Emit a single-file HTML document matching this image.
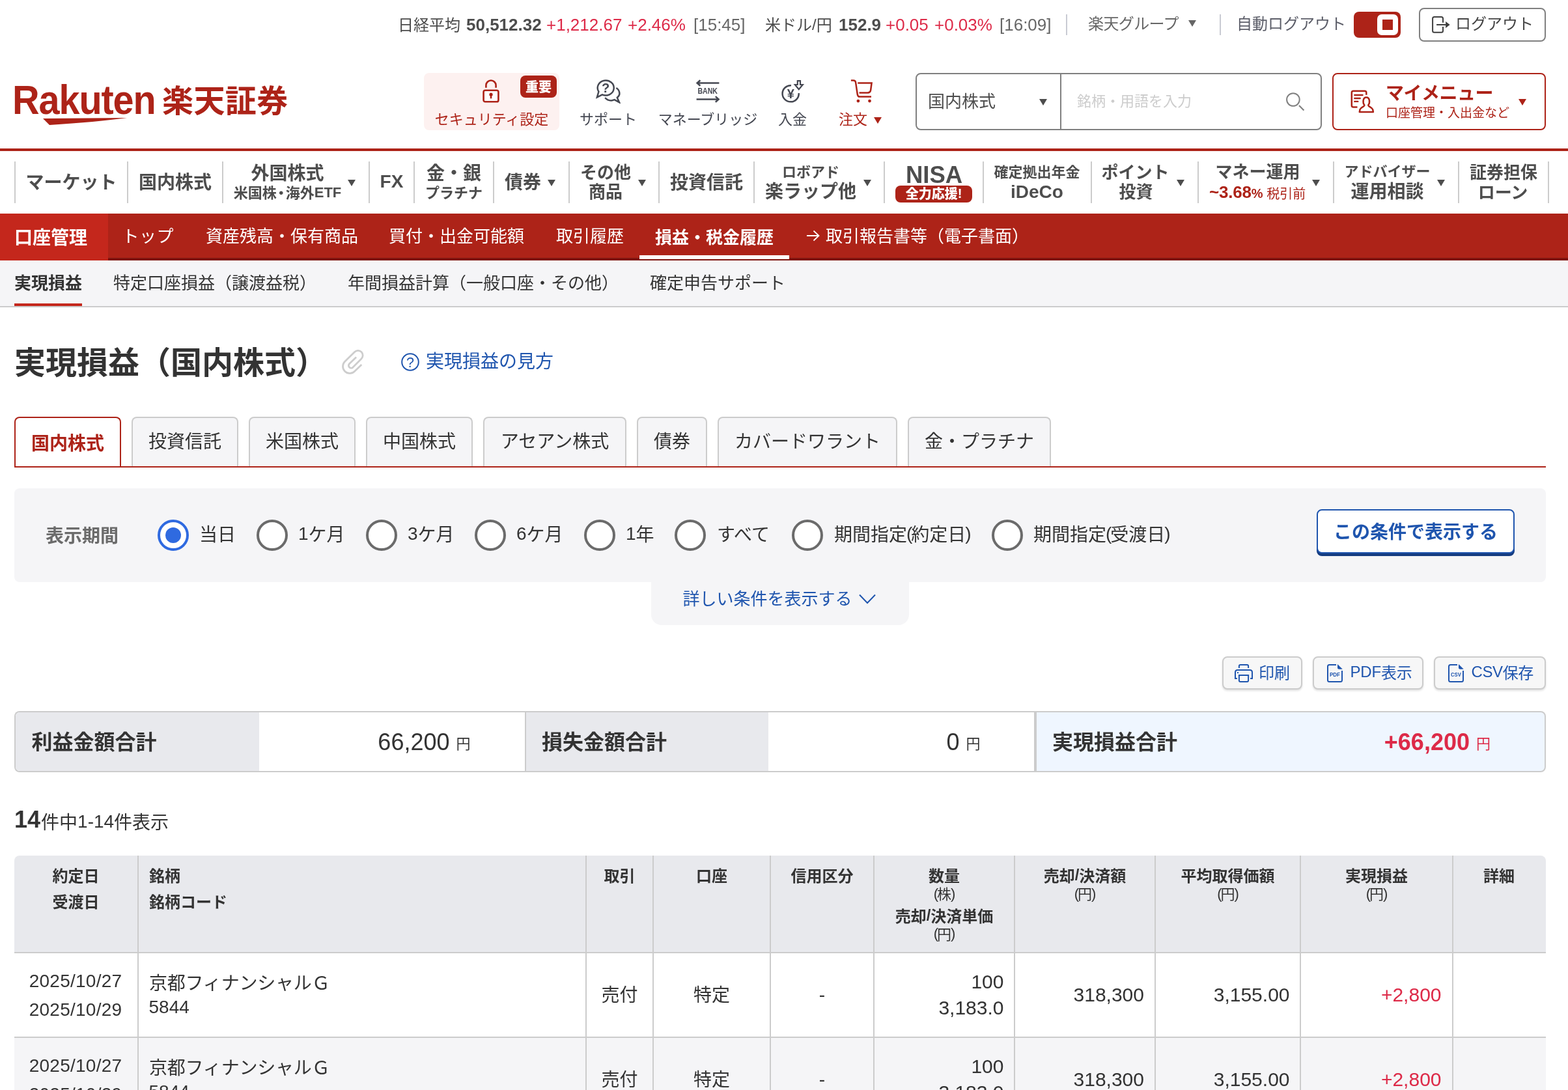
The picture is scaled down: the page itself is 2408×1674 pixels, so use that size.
<!DOCTYPE html>
<html lang="ja">
<head>
<meta charset="utf-8">
<title>実現損益（国内株式）</title>
<style>
html,body{margin:0;padding:0;}
body{width:2408px;height:1674px;overflow:hidden;background:#fff;position:relative;font-family:"Liberation Sans","Noto Sans CJK JP",sans-serif;color:#333;}
.t{position:absolute;white-space:nowrap;line-height:1;backface-visibility:hidden;}
.x{position:absolute;box-sizing:border-box;display:block;}
svg.x{backface-visibility:hidden;}
.j{position:relative;top:0.065em}
.p{letter-spacing:-2px;margin-left:-1px}
svg text{font-family:"Liberation Sans","Noto Sans CJK JP",sans-serif;}
</style>
</head>
<body>
<div class="t" style="left:611px;top:25.5px;font-size:24px;color:#4a4a4a;"><span class="j">日経平均</span></div>
<div class="t" style="left:716px;top:25px;font-size:26px;color:#4d4d4d;font-weight:700;">50,512.32</div>
<div class="t" style="left:839px;top:25px;font-size:26px;color:#dd2a48;">+1,212.67</div>
<div class="t" style="left:964px;top:25px;font-size:26px;color:#dd2a48;">+2.46%</div>
<div class="t" style="left:1065px;top:25px;font-size:26px;color:#666;">[15:45]</div>
<div class="t" style="left:1175px;top:25.5px;font-size:24px;color:#4a4a4a;"><span class="j">米ドル</span>/<span class="j">円</span></div>
<div class="t" style="left:1288px;top:25px;font-size:26px;color:#4d4d4d;font-weight:700;">152.9</div>
<div class="t" style="left:1360px;top:25px;font-size:26px;color:#dd2a48;">+0.05</div>
<div class="t" style="left:1435px;top:25px;font-size:26px;color:#dd2a48;">+0.03%</div>
<div class="t" style="left:1535px;top:25px;font-size:26px;color:#666;">[16:09]</div>
<div class="x" style="left:1637px;top:22px;width:2px;height:32px;background:#c9cbd3;"></div>
<div class="t" style="left:1671px;top:23.5px;font-size:24px;color:#666;letter-spacing:-0.6px;"><span class="j">楽天グループ</span></div>
<div class="x" style="left:1825px;top:31px;width:0;height:0;border-left:6px solid transparent;border-right:6px solid transparent;border-top:10px solid #666;"></div>
<div class="x" style="left:1873px;top:22px;width:2px;height:32px;background:#c9cbd3;"></div>
<div class="t" style="left:1899px;top:23.5px;font-size:24px;color:#5c5e69;"><span class="j">自動ログアウト</span></div>
<div class="x" style="left:2079px;top:18px;width:72px;height:40px;background:#ad2318;border-radius:8px;"></div>
<div class="x" style="left:2115px;top:22px;width:32px;height:32px;background:#fff;border-radius:7px;"></div>
<div class="x" style="left:2123px;top:30px;width:16px;height:16px;background:#ad2318;"></div>
<div class="x" style="left:2179px;top:12px;width:195px;height:52px;border:2px solid #808080;border-radius:8px;background:#fff;"></div>
<svg class="x" style="left:2198px;top:24px;" width="30" height="28" viewBox="0 0 30 28"><path d="M18 10.8V4.6Q18 2.1 15.5 2.1H4.6Q2.1 2.1 2.1 4.6V23.3Q2.1 25.8 4.6 25.8H15.5Q18 25.8 18 23.3V17.1" fill="none" stroke="#3e3e3e" stroke-width="2"/><path d="M8.1 14H22.5" fill="none" stroke="#3e3e3e" stroke-width="2"/><path d="M22.1 9.1L28.6 14L22.1 18.9Z" fill="#3e3e3e"/></svg>
<div class="t" style="left:2235px;top:23.5px;font-size:24px;color:#444;"><span class="j">ログアウト</span></div>
<div class="t" style="left:18.7px;top:122.25px;font-size:63.5px;color:#ad2318;font-weight:700;letter-spacing:-1.2px;transform:scaleX(0.907);transform-origin:0 50%;">Rakuten</div>
<svg class="x" style="left:64px;top:180px" width="134" height="14" viewBox="0 0 134 14"><path d="M2 2 L131 1 C100 5 60 9 12 12 Z" fill="#ad2318"/></svg>
<div class="t" style="left:249px;top:129px;font-size:48px;color:#ad2318;font-weight:700;letter-spacing:0.4px;"><span class="j">楽天証券</span></div>
<div class="x" style="left:651px;top:112px;width:208px;height:88px;background:#fdf1f0;border-radius:8px;"></div>
<svg class="x" style="left:740px;top:121px;" width="28" height="38" viewBox="0 0 28 38"><path d="M6.4 13.8V10.1A7.6 7.6 0 0 1 21.6 10.1V13.8" fill="none" stroke="#ad2318" stroke-width="2.6"/><rect x="2.6" y="17.8" width="22.8" height="17.5" rx="2.6" fill="#fff" stroke="#ad2318" stroke-width="2.6"/><circle cx="14" cy="24.2" r="2.6" fill="#ad2318"/><path d="M13 24H15L15.4 30.2H12.6Z" fill="#ad2318"/></svg>
<div class="x" style="left:799px;top:116px;width:56px;height:34px;background:#ad2318;border-radius:8px;"></div>
<div class="t" style="left:827px;transform:translateX(-50%);top:123px;font-size:20px;color:#fff;font-weight:900;"><span class="j">重要</span></div>
<div class="t" style="left:755px;transform:translateX(-50%);top:171.5px;font-size:22px;color:#ad2318;"><span class="j">セキュリティ設定</span></div>
<svg class="x" style="left:915px;top:121px;" width="38" height="38" viewBox="0 0 38 38"><path d="M4.4 19.75A12.5 11.5 0 1 1 9.9 24.4L1.9 28.4Z" fill="none" stroke="#454852" stroke-width="2.5" stroke-linejoin="miter"/><path d="M31.4 14C34.5 16 36.4 19.5 36.4 22.8C36.4 25 35 27.3 32.8 29L36 36.2L28.6 32.2C27 32.9 25.4 33.4 23.6 33.4C19.8 33.4 16.4 31.7 14.2 29" fill="none" stroke="#454852" stroke-width="2.5" stroke-linejoin="miter"/><text x="15.2" y="21.3" font-size="20" font-weight="700" fill="#454852" text-anchor="middle">?</text></svg>
<div class="t" style="left:934px;transform:translateX(-50%);top:171.5px;font-size:22px;color:#454852;"><span class="j">サポート</span></div>
<svg class="x" style="left:1068px;top:121px;" width="38" height="38" viewBox="0 0 38 38"><path d="M36.4 6.5H3M7.4 2.2L2.6 6.5L7.4 10.8" fill="none" stroke="#454852" stroke-width="2.5"/><path d="M1.6 31.4H35.2M30.8 27.1L35.6 31.4L30.8 35.7" fill="none" stroke="#454852" stroke-width="2.5"/><text x="18.75" y="23.4" font-size="12.8" font-weight="700" fill="#454852" text-anchor="middle" textLength="30.5" lengthAdjust="spacingAndGlyphs">BANK</text></svg>
<div class="t" style="left:1087px;transform:translateX(-50%);top:171.5px;font-size:22px;color:#454852;"><span class="j">マネーブリッジ</span></div>
<svg class="x" style="left:1198px;top:121px;" width="38" height="38" viewBox="0 0 38 38"><path d="M17 10.2A12.6 12.6 0 1 0 28.75 22" fill="none" stroke="#454852" stroke-width="2.5"/><path d="M26.8 3.2H31V9H34.8L28.8 16.3L22.8 9H26.8Z" fill="none" stroke="#454852" stroke-width="2.2" stroke-linejoin="miter"/><text x="16.2" y="30" font-size="20" font-weight="700" fill="#454852" text-anchor="middle">¥</text></svg>
<div class="t" style="left:1217px;transform:translateX(-50%);top:171.5px;font-size:22px;color:#454852;"><span class="j">入金</span></div>
<svg class="x" style="left:1305px;top:121px;" width="36" height="38" viewBox="0 0 36 38"><path d="M1.9 2.6H5.6Q8.6 2.6 9.1 5.6L11.8 24Q12.3 27.6 15.5 27.6H33" fill="none" stroke="#ad2318" stroke-width="2.5"/><path d="M12.3 6.5H33.6L32.2 17Q31.6 21.4 27.5 21.4H14.5" fill="none" stroke="#ad2318" stroke-width="2.5"/><circle cx="12.9" cy="34.1" r="2.4" fill="#ad2318"/><circle cx="30.5" cy="34.1" r="2.4" fill="#ad2318"/></svg>
<div class="t" style="left:1288px;top:171.5px;font-size:22px;color:#ad2318;"><span class="j">注文</span></div>
<div class="x" style="left:1342px;top:179.5px;width:0;height:0;border-left:6px solid transparent;border-right:6px solid transparent;border-top:10px solid #ad2318;"></div>
<div class="x" style="left:1406px;top:112px;width:624px;height:88px;border:2px solid #808080;border-radius:8px;background:#fff;"></div>
<div class="x" style="left:1628px;top:114px;width:2px;height:84px;background:#808080;"></div>
<div class="t" style="left:1425px;top:141.5px;font-size:26px;color:#4d4d4d;"><span class="j">国内株式</span></div>
<div class="x" style="left:1596px;top:151.5px;width:0;height:0;border-left:6px solid transparent;border-right:6px solid transparent;border-top:10px solid #4d4d4d;"></div>
<div class="t" style="left:1654px;top:144px;font-size:22px;color:#ccc;"><span class="j">銘柄・用語を入力</span></div>
<svg class="x" style="left:1973px;top:141px;" width="32" height="30" viewBox="0 0 32 30"><circle cx="12.9" cy="12" r="9.8" fill="none" stroke="#808080" stroke-width="2"/><path d="M22 20.9L29.4 28.5" fill="none" stroke="#808080" stroke-width="2.2"/></svg>
<div class="x" style="left:2046px;top:112px;width:328px;height:88px;border:2px solid #ad2318;border-radius:8px;background:#fff;"></div>
<svg class="x" style="left:2073px;top:137px;" width="38" height="38" viewBox="0 0 38 38"><path d="M25.3 8.7V5.3Q25.3 2.8 22.8 2.8H5.3Q2.8 2.8 2.8 5.3V24.9Q2.8 27.4 5.3 27.4H11.5" fill="none" stroke="#ad2318" stroke-width="2.5"/><path d="M7.3 9H19.5M7.3 14H15.7M7.3 18.9H12.3" fill="none" stroke="#ad2318" stroke-width="2.4" stroke-linecap="round"/><path d="M22.3 24.3C19.6 21.5 19.6 12.4 25.3 12.4C31 12.4 31 21.5 28.3 24.3C27.6 26.6 33.8 27.3 35.2 31.2L35.9 34.9H14.8L15.5 31.2C16.9 27.3 23 26.6 22.3 24.3Z" fill="none" stroke="#ad2318" stroke-width="2.5" stroke-linejoin="round"/></svg>
<div class="t" style="left:2128px;top:128px;font-size:28px;color:#ad2318;font-weight:700;letter-spacing:-0.5px;"><span class="j">マイメニュー</span></div>
<div class="t" style="left:2128px;top:163px;font-size:19px;color:#ad2318;"><span class="j">口座管理・入出金など</span></div>
<div class="x" style="left:2332px;top:151.5px;width:0;height:0;border-left:6px solid transparent;border-right:6px solid transparent;border-top:10px solid #ad2318;"></div>
<div class="x" style="left:0px;top:228px;width:2408px;height:4px;background:#ad2318;"></div>
<div class="x" style="left:22px;top:248px;width:2px;height:64px;background:#ccc;"></div>
<div class="x" style="left:195px;top:248px;width:2px;height:64px;background:#ccc;"></div>
<div class="x" style="left:341px;top:248px;width:2px;height:64px;background:#ccc;"></div>
<div class="x" style="left:566px;top:248px;width:2px;height:64px;background:#ccc;"></div>
<div class="x" style="left:635px;top:248px;width:2px;height:64px;background:#ccc;"></div>
<div class="x" style="left:757px;top:248px;width:2px;height:64px;background:#ccc;"></div>
<div class="x" style="left:873px;top:248px;width:2px;height:64px;background:#ccc;"></div>
<div class="x" style="left:1011px;top:248px;width:2px;height:64px;background:#ccc;"></div>
<div class="x" style="left:1157px;top:248px;width:2px;height:64px;background:#ccc;"></div>
<div class="x" style="left:1357px;top:248px;width:2px;height:64px;background:#ccc;"></div>
<div class="x" style="left:1509px;top:248px;width:2px;height:64px;background:#ccc;"></div>
<div class="x" style="left:1675px;top:248px;width:2px;height:64px;background:#ccc;"></div>
<div class="x" style="left:1839px;top:248px;width:2px;height:64px;background:#ccc;"></div>
<div class="x" style="left:2047px;top:248px;width:2px;height:64px;background:#ccc;"></div>
<div class="x" style="left:2239px;top:248px;width:2px;height:64px;background:#ccc;"></div>
<div class="x" style="left:2377px;top:248px;width:2px;height:64px;background:#ccc;"></div>
<div class="t" style="left:109.5px;transform:translateX(-50%);top:265px;font-size:28px;color:#4d4d4d;font-weight:700;"><span class="j">マーケット</span></div>
<div class="t" style="left:269px;transform:translateX(-50%);top:265px;font-size:28px;color:#4d4d4d;font-weight:700;"><span class="j">国内株式</span></div>
<div class="t" style="left:441.5px;transform:translateX(-50%);top:251.5px;font-size:28px;color:#4d4d4d;font-weight:700;"><span class="j">外国株式</span></div>
<div class="t" style="left:441.5px;transform:translateX(-50%);top:285px;font-size:22px;color:#4d4d4d;font-weight:700;"><span class="j">米国株</span><span style="letter-spacing:-4px;margin-left:-4px"><span class="j">・</span></span><span class="j">海外</span>ETF</div>
<div class="x" style="left:534px;top:275.5px;width:0;height:0;border-left:6px solid transparent;border-right:6px solid transparent;border-top:10px solid #4d4d4d;"></div>
<div class="t" style="left:601.5px;transform:translateX(-50%);top:265px;font-size:28px;color:#4d4d4d;font-weight:700;">FX</div>
<div class="t" style="left:697px;transform:translateX(-50%);top:251.5px;font-size:28px;color:#4d4d4d;font-weight:700;"><span class="j">金・銀</span></div>
<div class="t" style="left:697px;transform:translateX(-50%);top:284.5px;font-size:22px;color:#4d4d4d;font-weight:700;"><span class="j">プラチナ</span></div>
<div class="t" style="left:803px;transform:translateX(-50%);top:265px;font-size:28px;color:#4d4d4d;font-weight:700;"><span class="j">債券</span></div>
<div class="x" style="left:841px;top:275.5px;width:0;height:0;border-left:6px solid transparent;border-right:6px solid transparent;border-top:10px solid #4d4d4d;"></div>
<div class="t" style="left:930px;transform:translateX(-50%);top:250px;font-size:26px;color:#4d4d4d;font-weight:700;"><span class="j">その他</span></div>
<div class="t" style="left:930px;transform:translateX(-50%);top:280.5px;font-size:26px;color:#4d4d4d;font-weight:700;"><span class="j">商品</span></div>
<div class="x" style="left:979.5px;top:275.5px;width:0;height:0;border-left:6px solid transparent;border-right:6px solid transparent;border-top:10px solid #4d4d4d;"></div>
<div class="t" style="left:1085px;transform:translateX(-50%);top:265px;font-size:28px;color:#4d4d4d;font-weight:700;"><span class="j">投資信託</span></div>
<div class="t" style="left:1245px;transform:translateX(-50%);top:252.5px;font-size:22px;color:#4d4d4d;font-weight:700;"><span class="j">ロボアド</span></div>
<div class="t" style="left:1245px;transform:translateX(-50%);top:279.5px;font-size:28px;color:#4d4d4d;font-weight:700;"><span class="j">楽ラップ他</span></div>
<div class="x" style="left:1325.5px;top:275.5px;width:0;height:0;border-left:6px solid transparent;border-right:6px solid transparent;border-top:10px solid #4d4d4d;"></div>
<div class="t" style="left:1434.5px;transform:translateX(-50%);top:250.75px;font-size:36.5px;color:#4d4d4d;font-weight:700;">NISA</div>
<div class="x" style="left:1375px;top:285px;width:118px;height:26px;background:#ad2318;border-radius:8px;"></div>
<div class="t" style="left:1434px;transform:translateX(-50%);top:286.5px;font-size:20px;color:#fff;font-weight:900;"><span class="j">全力応援</span>!</div>
<div class="t" style="left:1592.5px;transform:translateX(-50%);top:252.5px;font-size:22px;color:#4d4d4d;font-weight:700;"><span class="j">確定拠出年金</span></div>
<div class="t" style="left:1592.5px;transform:translateX(-50%);top:281px;font-size:28px;color:#4d4d4d;font-weight:700;">iDeCo</div>
<div class="t" style="left:1743.5px;transform:translateX(-50%);top:250.5px;font-size:26px;color:#4d4d4d;font-weight:700;"><span class="j">ポイント</span></div>
<div class="t" style="left:1744.5px;transform:translateX(-50%);top:280px;font-size:26px;color:#4d4d4d;font-weight:700;"><span class="j">投資</span></div>
<div class="x" style="left:1807px;top:275.5px;width:0;height:0;border-left:6px solid transparent;border-right:6px solid transparent;border-top:10px solid #4d4d4d;"></div>
<div class="t" style="left:1931.5px;transform:translateX(-50%);top:249.7px;font-size:26px;color:#4d4d4d;font-weight:700;"><span class="j">マネー運用</span></div>
<div class="t" style="left:1857px;top:281px;font-size:28px;color:#ad2318;"><span style="font-weight:700;font-size:26px;letter-spacing:-0.2px">~3.68</span><span style="font-weight:700;font-size:20px">%</span><span style="font-size:20px"> <span class="j">税引前</span></span></div>
<div class="x" style="left:2014.5px;top:275.5px;width:0;height:0;border-left:6px solid transparent;border-right:6px solid transparent;border-top:10px solid #4d4d4d;"></div>
<div class="t" style="left:2130.5px;transform:translateX(-50%);top:252px;font-size:22px;color:#4d4d4d;font-weight:700;"><span class="j">アドバイザー</span></div>
<div class="t" style="left:2130.5px;transform:translateX(-50%);top:279.5px;font-size:28px;color:#4d4d4d;font-weight:700;"><span class="j">運用相談</span></div>
<div class="x" style="left:2207px;top:275.5px;width:0;height:0;border-left:6px solid transparent;border-right:6px solid transparent;border-top:10px solid #4d4d4d;"></div>
<div class="t" style="left:2309px;transform:translateX(-50%);top:250px;font-size:26px;color:#4d4d4d;font-weight:700;"><span class="j">証券担保</span></div>
<div class="t" style="left:2308px;transform:translateX(-50%);top:281px;font-size:26px;color:#4d4d4d;font-weight:700;"><span class="j">ローン</span></div>
<div class="x" style="left:0px;top:328px;width:2408px;height:72px;background:#ad2318;border-bottom:4px solid #7e140e;"></div>
<div class="x" style="left:0px;top:328px;width:166px;height:72px;background:#c4271c;"></div>
<div class="t" style="left:22px;top:350px;font-size:28px;color:#fff;font-weight:700;"><span class="j">口座管理</span></div>
<div class="t" style="left:187.5px;top:348.5px;font-size:26px;color:#fff;letter-spacing:0.5px;"><span class="j">トップ</span></div>
<div class="t" style="left:316px;top:348.5px;font-size:26px;color:#fff;"><span class="j">資産残高・保有商品</span></div>
<div class="t" style="left:597px;top:348.5px;font-size:26px;color:#fff;"><span class="j">買付・出金可能額</span></div>
<div class="t" style="left:854px;top:348.5px;font-size:26px;color:#fff;"><span class="j">取引履歴</span></div>
<div class="t" style="left:1006px;top:350px;font-size:26px;color:#fff;font-weight:700;"><span class="j">損益・税金履歴</span></div>
<div class="x" style="left:982px;top:392px;width:230px;height:5.5px;background:#fff;"></div>
<svg class="x" style="left:1238px;top:352px;" width="22" height="20" viewBox="0 0 22 20"><path d="M1 10h18M11.500 2.500l8 7.500-8 7.500" fill="none" stroke="#fff" stroke-width="1.800"/></svg>
<div class="t" style="left:1268px;top:348.5px;font-size:26px;color:#fff;"><span class="j">取引報告書等（電子書面）</span></div>
<div class="x" style="left:0px;top:400px;width:2408px;height:72px;background:#f5f5f7;border-bottom:2px solid #ccc;"></div>
<div class="t" style="left:22px;top:420px;font-size:26px;color:#333;font-weight:700;"><span class="j">実現損益</span></div>
<div class="x" style="left:22px;top:466px;width:104px;height:4px;background:#c4271c;"></div>
<div class="t" style="left:174px;top:420px;font-size:26px;color:#333;"><span class="j">特定口座損益（譲渡益税）</span></div>
<div class="t" style="left:534px;top:420px;font-size:26px;color:#333;"><span class="j">年間損益計算（一般口座・その他）</span></div>
<div class="t" style="left:998px;top:420px;font-size:26px;color:#333;"><span class="j">確定申告サポート</span></div>
<div class="t" style="left:22px;top:530.5px;font-size:48px;color:#333;font-weight:700;"><span class="j">実現損益（国内株式）</span></div>
<svg class="x" style="left:524px;top:536.5px;" width="38" height="42" viewBox="0 0 38 42"><path d="M23.1 11.5L12.4 21.7A3.9 3.9 0 0 0 17.8 27.3L31 14A7.35 7.35 0 0 0 20.6 3.6L5.6 18.2A10.6 10.6 0 0 0 20.6 33.2L31.3 23" fill="none" stroke="#cdcdcd" stroke-width="2.8"/></svg>
<svg class="x" style="left:616px;top:542px;" width="28" height="28" viewBox="0 0 28 28"><circle cx="14" cy="14" r="12.800" fill="none" stroke="#1f55ae" stroke-width="2"/><text x="14" y="21.8" font-size="21.5" fill="#1f55ae" text-anchor="middle">?</text></svg>
<div class="t" style="left:654px;top:540px;font-size:28px;color:#1f55ae;"><span class="j">実現損益の見方</span></div>
<div class="x" style="left:22px;top:716px;width:2352px;height:2px;background:#ad2318;"></div>
<div class="x" style="left:22px;top:640px;width:164px;height:76px;border:2px solid #ad2318;border-bottom:none;border-radius:8px 8px 0 0;background:#fff;"></div>
<div class="t" style="left:104px;transform:translateX(-50%);top:666px;font-size:28px;color:#ad2318;font-weight:700;"><span class="j">国内株式</span></div>
<div class="x" style="left:202px;top:640px;width:164px;height:76px;border:2px solid #ccc;border-bottom:none;border-radius:8px 8px 0 0;background:#f5f5f7;"></div>
<div class="t" style="left:284px;transform:translateX(-50%);top:663px;font-size:28px;color:#333;"><span class="j">投資信託</span></div>
<div class="x" style="left:382px;top:640px;width:164px;height:76px;border:2px solid #ccc;border-bottom:none;border-radius:8px 8px 0 0;background:#f5f5f7;"></div>
<div class="t" style="left:464px;transform:translateX(-50%);top:663px;font-size:28px;color:#333;"><span class="j">米国株式</span></div>
<div class="x" style="left:562px;top:640px;width:164px;height:76px;border:2px solid #ccc;border-bottom:none;border-radius:8px 8px 0 0;background:#f5f5f7;"></div>
<div class="t" style="left:644px;transform:translateX(-50%);top:663px;font-size:28px;color:#333;"><span class="j">中国株式</span></div>
<div class="x" style="left:742px;top:640px;width:220px;height:76px;border:2px solid #ccc;border-bottom:none;border-radius:8px 8px 0 0;background:#f5f5f7;"></div>
<div class="t" style="left:852px;transform:translateX(-50%);top:663px;font-size:28px;color:#333;"><span class="j">アセアン株式</span></div>
<div class="x" style="left:978px;top:640px;width:108px;height:76px;border:2px solid #ccc;border-bottom:none;border-radius:8px 8px 0 0;background:#f5f5f7;"></div>
<div class="t" style="left:1032px;transform:translateX(-50%);top:663px;font-size:28px;color:#333;"><span class="j">債券</span></div>
<div class="x" style="left:1102px;top:640px;width:276px;height:76px;border:2px solid #ccc;border-bottom:none;border-radius:8px 8px 0 0;background:#f5f5f7;"></div>
<div class="t" style="left:1240px;transform:translateX(-50%);top:663px;font-size:28px;color:#333;"><span class="j">カバードワラント</span></div>
<div class="x" style="left:1394px;top:640px;width:220px;height:76px;border:2px solid #ccc;border-bottom:none;border-radius:8px 8px 0 0;background:#f5f5f7;"></div>
<div class="t" style="left:1504px;transform:translateX(-50%);top:663px;font-size:28px;color:#333;"><span class="j">金・プラチナ</span></div>
<div class="x" style="left:22px;top:750px;width:2352px;height:144px;background:#f5f5f7;border-radius:8px;"></div>
<div class="x" style="left:1000px;top:890px;width:396px;height:70px;background:#f5f5f7;border-radius:0 0 16px 16px;"></div>
<div class="t" style="left:70px;top:808px;font-size:28px;color:#6b6b6b;font-weight:700;"><span class="j">表示期間</span></div>
<div class="x" style="left:242px;top:798px;width:48px;height:48px;border:4px solid #2f6ae0;border-radius:50%;background:#fff;"></div>
<div class="x" style="left:254px;top:810px;width:24px;height:24px;border-radius:50%;background:#2f6ae0;"></div>
<div class="t" style="left:306px;top:806px;font-size:28px;color:#333;"><span class="j">当日</span></div>
<div class="x" style="left:394px;top:798px;width:48px;height:48px;border:4px solid #6b6b6b;border-radius:50%;background:#fff;"></div>
<div class="t" style="left:458px;top:806px;font-size:28px;color:#333;">1<span class="j">ケ月</span></div>
<div class="x" style="left:562px;top:798px;width:48px;height:48px;border:4px solid #6b6b6b;border-radius:50%;background:#fff;"></div>
<div class="t" style="left:626px;top:806px;font-size:28px;color:#333;">3<span class="j">ケ月</span></div>
<div class="x" style="left:729px;top:798px;width:48px;height:48px;border:4px solid #6b6b6b;border-radius:50%;background:#fff;"></div>
<div class="t" style="left:793px;top:806px;font-size:28px;color:#333;">6<span class="j">ケ月</span></div>
<div class="x" style="left:897px;top:798px;width:48px;height:48px;border:4px solid #6b6b6b;border-radius:50%;background:#fff;"></div>
<div class="t" style="left:961px;top:806px;font-size:28px;color:#333;">1<span class="j">年</span></div>
<div class="x" style="left:1036px;top:798px;width:48px;height:48px;border:4px solid #6b6b6b;border-radius:50%;background:#fff;"></div>
<div class="t" style="left:1101px;top:806px;font-size:28px;color:#333;"><span class="j">すべて</span></div>
<div class="x" style="left:1216px;top:798px;width:48px;height:48px;border:4px solid #6b6b6b;border-radius:50%;background:#fff;"></div>
<div class="t" style="left:1281px;top:806px;font-size:28px;color:#333;"><span class="j">期間指定</span><span class="p">(</span><span class="j">約定日</span><span class="p">)</span></div>
<div class="x" style="left:1523px;top:798px;width:48px;height:48px;border:4px solid #6b6b6b;border-radius:50%;background:#fff;"></div>
<div class="t" style="left:1587px;top:806px;font-size:28px;color:#333;"><span class="j">期間指定</span><span class="p">(</span><span class="j">受渡日</span><span class="p">)</span></div>
<div class="x" style="left:2022px;top:782px;width:304px;height:68px;border:2px solid #1f55ae;border-radius:8px;background:#fff;box-shadow:0 4px 0 #153c80;"></div>
<div class="t" style="left:2174px;transform:translateX(-50%);top:802px;font-size:28px;color:#1f55ae;font-weight:700;"><span class="j">この条件で表示する</span></div>
<div class="t" style="left:1048.5px;top:905.5px;font-size:26px;color:#1f55ae;"><span class="j">詳しい条件を表示する</span></div>
<svg class="x" style="left:1318px;top:911px;" width="28" height="18" viewBox="0 0 28 18"><path d="M2 2.500l12 12.500 12-12.500" fill="none" stroke="#1f55ae" stroke-width="2"/></svg>
<div class="x" style="left:1877px;top:1008px;width:123px;height:51px;border:2px solid #ccc;border-radius:8px;background:#f7f7f7;box-shadow:0 2px 3px rgba(0,0,0,.12);"></div>
<div class="x" style="left:2016px;top:1008px;width:170px;height:51px;border:2px solid #ccc;border-radius:8px;background:#f7f7f7;box-shadow:0 2px 3px rgba(0,0,0,.12);"></div>
<div class="x" style="left:2202px;top:1008px;width:172px;height:51px;border:2px solid #ccc;border-radius:8px;background:#f7f7f7;box-shadow:0 2px 3px rgba(0,0,0,.12);"></div>
<svg class="x" style="left:1895px;top:1019px;" width="30" height="30" viewBox="0 0 30 30"><path d="M7.9 7V3.9Q7.9 1.9 9.9 1.9H20.1Q22.1 1.9 22.1 3.9V7" fill="none" stroke="#1f55ae" stroke-width="2"/><path d="M4.9 23H2V13.4Q2 9.9 5.5 9.9H24.5Q28 9.9 28 13.4V23H25.1" fill="none" stroke="#1f55ae" stroke-width="2"/><path d="M7.9 18.1H22.1V26Q22.1 28 20.1 28H9.9Q7.9 28 7.9 26Z" fill="none" stroke="#1f55ae" stroke-width="2"/><rect x="5" y="13.1" width="2" height="2" fill="#1f55ae"/></svg>
<div class="t" style="left:1933px;top:1020px;font-size:24px;color:#1f55ae;"><span class="j">印刷</span></div>
<svg class="x" style="left:2037px;top:1019px;" width="26" height="30" viewBox="0 0 26 30"><path d="M15 1.9H4.5Q2 1.9 2 4.4V25.6Q2 28.1 4.5 28.1H21.5Q24 28.1 24 25.6V11.1" fill="none" stroke="#1f55ae" stroke-width="2"/><path d="M17 1.1V6.3Q17 8.8 19.5 8.8H24.8Z" fill="#1f55ae"/><text x="13" y="19.9" font-size="9.6" font-weight="700" fill="#1f55ae" text-anchor="middle" textLength="16" lengthAdjust="spacingAndGlyphs">PDF</text></svg>
<div class="t" style="left:2073.5px;top:1020px;font-size:24px;color:#1f55ae;letter-spacing:-0.2px;">PDF<span class="j">表示</span></div>
<svg class="x" style="left:2223px;top:1019px;" width="26" height="30" viewBox="0 0 26 30"><path d="M15 1.9H4.5Q2 1.9 2 4.4V25.6Q2 28.1 4.5 28.1H21.5Q24 28.1 24 25.6V11.1" fill="none" stroke="#1f55ae" stroke-width="2"/><path d="M17 1.1V6.3Q17 8.8 19.5 8.8H24.8Z" fill="#1f55ae"/><text x="13" y="19.9" font-size="9.6" font-weight="700" fill="#1f55ae" text-anchor="middle" textLength="16" lengthAdjust="spacingAndGlyphs">CSV</text></svg>
<div class="t" style="left:2259.5px;top:1020px;font-size:24px;color:#1f55ae;letter-spacing:-0.4px;">CSV<span class="j">保存</span></div>
<div class="x" style="left:22px;top:1092px;width:1568px;height:94px;border:2px solid #ccc;border-right:none;border-radius:8px 0 0 8px;background:#fff;"></div>
<div class="x" style="left:24px;top:1094px;width:374px;height:90px;background:#e8e9ed;border-radius:6px 0 0 6px;"></div>
<div class="x" style="left:806px;top:1094px;width:2px;height:90px;background:#ccc;"></div>
<div class="x" style="left:808px;top:1094px;width:372px;height:90px;background:#e8e9ed;"></div>
<div class="x" style="left:1588px;top:1092px;width:786px;height:94px;border:2px solid #ccc;border-left-width:4px;border-radius:0 8px 8px 0;background:#eff6ff;"></div>
<div class="t" style="left:48.5px;top:1122px;font-size:32px;color:#333;font-weight:700;"><span class="j">利益金額合計</span></div>
<div class="t" style="left:832px;top:1122px;font-size:32px;color:#333;font-weight:700;"><span class="j">損失金額合計</span></div>
<div class="t" style="left:1616px;top:1122px;font-size:32px;color:#333;font-weight:700;"><span class="j">実現損益合計</span></div>
<div class="t" style="right:1685.5px;top:1122px;font-size:36px;color:#333;"><span style="font-weight:400">66,200</span> <span style="font-size:22px;position:relative;top:-3px"><span class="j">円</span></span></div>
<div class="t" style="right:902.5px;top:1122px;font-size:36px;color:#333;"><span style="font-weight:400">0</span> <span style="font-size:22px;position:relative;top:-3px"><span class="j">円</span></span></div>
<div class="t" style="right:119px;top:1122px;font-size:36px;color:#dd2a48;"><span style="font-weight:700">+66,200</span> <span style="font-size:22px;position:relative;top:-3px"><span class="j">円</span></span></div>
<div class="t" style="left:22px;top:1241px;font-size:28px;color:#333;line-height:36px;"><span style="font-weight:700;font-size:36px">14</span><span style="margin-left:1px"><span class="j">件中</span>1-14<span class="j">件表示</span></span></div>
<div class="x" style="left:22px;top:1314px;width:2352px;height:150px;background:#e8e9ed;border-radius:8px 8px 0 0;border-bottom:2px solid #ccc;"></div>
<div class="x" style="left:22px;top:1464px;width:2352px;height:130px;background:#fff;border-bottom:2px solid #ccc;"></div>
<div class="x" style="left:22px;top:1594px;width:2352px;height:130px;background:#f5f5f7;border-bottom:2px solid #ccc;"></div>
<div class="x" style="left:211px;top:1314px;width:2px;height:360px;background:#ccc;"></div>
<div class="x" style="left:899px;top:1314px;width:2px;height:360px;background:#ccc;"></div>
<div class="x" style="left:1002px;top:1314px;width:2px;height:360px;background:#ccc;"></div>
<div class="x" style="left:1182px;top:1314px;width:2px;height:360px;background:#ccc;"></div>
<div class="x" style="left:1341px;top:1314px;width:2px;height:360px;background:#ccc;"></div>
<div class="x" style="left:1557px;top:1314px;width:2px;height:360px;background:#ccc;"></div>
<div class="x" style="left:1773px;top:1314px;width:2px;height:360px;background:#ccc;"></div>
<div class="x" style="left:1996px;top:1314px;width:2px;height:360px;background:#ccc;"></div>
<div class="x" style="left:2230px;top:1314px;width:2px;height:360px;background:#ccc;"></div>
<div class="t" style="left:116.5px;transform:translateX(-50%);top:1332px;font-size:24px;color:#333;font-weight:700;"><span class="j">約定日</span></div>
<div class="t" style="left:116.5px;transform:translateX(-50%);top:1372px;font-size:24px;color:#333;font-weight:700;"><span class="j">受渡日</span></div>
<div class="t" style="left:229px;top:1332px;font-size:24px;color:#333;font-weight:700;"><span class="j">銘柄</span></div>
<div class="t" style="left:229px;top:1372px;font-size:24px;color:#333;font-weight:700;"><span class="j">銘柄コード</span></div>
<div class="t" style="left:951.5px;transform:translateX(-50%);top:1332px;font-size:24px;color:#333;font-weight:700;"><span class="j">取引</span></div>
<div class="t" style="left:1093px;transform:translateX(-50%);top:1332px;font-size:24px;color:#333;font-weight:700;"><span class="j">口座</span></div>
<div class="t" style="left:1262.5px;transform:translateX(-50%);top:1332px;font-size:24px;color:#333;font-weight:700;"><span class="j">信用区分</span></div>
<div class="t" style="left:1450px;transform:translateX(-50%);top:1332px;font-size:24px;color:#333;font-weight:700;"><span class="j">数量</span></div>
<div class="t" style="left:1450px;transform:translateX(-50%);top:1361.7px;font-size:22px;color:#333;"><span class="p">(</span><span class="j">株</span><span class="p">)</span></div>
<div class="t" style="left:1450px;transform:translateX(-50%);top:1394px;font-size:24px;color:#333;font-weight:700;"><span class="j">売却</span>/<span class="j">決済単価</span></div>
<div class="t" style="left:1450px;transform:translateX(-50%);top:1423.3px;font-size:22px;color:#333;"><span class="p">(</span><span class="j">円</span><span class="p">)</span></div>
<div class="t" style="left:1666px;transform:translateX(-50%);top:1332px;font-size:24px;color:#333;font-weight:700;"><span class="j">売却</span>/<span class="j">決済額</span></div>
<div class="t" style="left:1666px;transform:translateX(-50%);top:1361.7px;font-size:22px;color:#333;"><span class="p">(</span><span class="j">円</span><span class="p">)</span></div>
<div class="t" style="left:1885.5px;transform:translateX(-50%);top:1332px;font-size:24px;color:#333;font-weight:700;"><span class="j">平均取得価額</span></div>
<div class="t" style="left:1885.5px;transform:translateX(-50%);top:1361.7px;font-size:22px;color:#333;"><span class="p">(</span><span class="j">円</span><span class="p">)</span></div>
<div class="t" style="left:2114px;transform:translateX(-50%);top:1332px;font-size:24px;color:#333;font-weight:700;"><span class="j">実現損益</span></div>
<div class="t" style="left:2114px;transform:translateX(-50%);top:1361.7px;font-size:22px;color:#333;"><span class="p">(</span><span class="j">円</span><span class="p">)</span></div>
<div class="t" style="left:2302px;transform:translateX(-50%);top:1332px;font-size:24px;color:#333;font-weight:700;"><span class="j">詳細</span></div>
<div class="t" style="left:116px;transform:translateX(-50%);top:1492.5px;font-size:28px;color:#333;letter-spacing:0.25px;">2025/10/27</div>
<div class="t" style="left:116px;transform:translateX(-50%);top:1536.5px;font-size:28px;color:#333;letter-spacing:0.25px;">2025/10/29</div>
<div class="t" style="left:229px;top:1495px;font-size:28px;color:#333;letter-spacing:-0.2px;"><span class="j">京都フィナンシャルＧ</span></div>
<div class="t" style="left:228.5px;top:1532.5px;font-size:28px;color:#333;">5844</div>
<div class="t" style="left:951.5px;transform:translateX(-50%);top:1513px;font-size:28px;color:#333;"><span class="j">売付</span></div>
<div class="t" style="left:1093px;transform:translateX(-50%);top:1513px;font-size:28px;color:#333;"><span class="j">特定</span></div>
<div class="t" style="left:1262.5px;transform:translateX(-50%);top:1514px;font-size:28px;color:#333;">-</div>
<div class="t" style="right:866.5px;top:1492.5px;font-size:30px;color:#333;">100</div>
<div class="t" style="right:866.5px;top:1533px;font-size:30px;color:#333;">3,183.0</div>
<div class="t" style="right:651px;top:1513px;font-size:30px;color:#333;">318,300</div>
<div class="t" style="right:427.5px;top:1513px;font-size:30px;color:#333;">3,155.00</div>
<div class="t" style="right:194.5px;top:1513px;font-size:30px;color:#dd2a48;">+2,800</div>
<div class="t" style="left:116px;transform:translateX(-50%);top:1622.5px;font-size:28px;color:#333;letter-spacing:0.25px;">2025/10/27</div>
<div class="t" style="left:116px;transform:translateX(-50%);top:1666.5px;font-size:28px;color:#333;letter-spacing:0.25px;">2025/10/29</div>
<div class="t" style="left:229px;top:1625px;font-size:28px;color:#333;letter-spacing:-0.2px;"><span class="j">京都フィナンシャルＧ</span></div>
<div class="t" style="left:228.5px;top:1662.5px;font-size:28px;color:#333;">5844</div>
<div class="t" style="left:951.5px;transform:translateX(-50%);top:1643px;font-size:28px;color:#333;"><span class="j">売付</span></div>
<div class="t" style="left:1093px;transform:translateX(-50%);top:1643px;font-size:28px;color:#333;"><span class="j">特定</span></div>
<div class="t" style="left:1262.5px;transform:translateX(-50%);top:1644px;font-size:28px;color:#333;">-</div>
<div class="t" style="right:866.5px;top:1622.5px;font-size:30px;color:#333;">100</div>
<div class="t" style="right:866.5px;top:1663px;font-size:30px;color:#333;">3,183.0</div>
<div class="t" style="right:651px;top:1643px;font-size:30px;color:#333;">318,300</div>
<div class="t" style="right:427.5px;top:1643px;font-size:30px;color:#333;">3,155.00</div>
<div class="t" style="right:194.5px;top:1643px;font-size:30px;color:#dd2a48;">+2,800</div>
</body>
</html>
